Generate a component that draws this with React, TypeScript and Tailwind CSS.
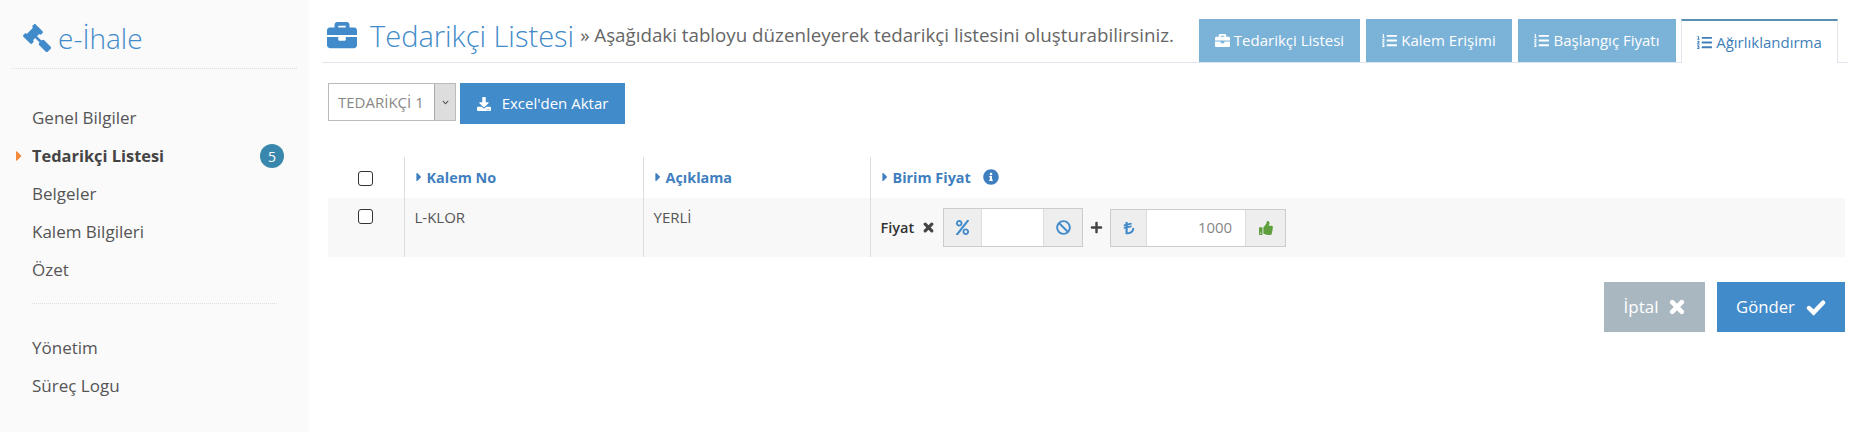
import {
  FaBan,
  FaBriefcase,
  FaCaretRight,
  FaChevronDown,
  FaDownload,
  FaGavel,
  FaInfoCircle,
  FaLiraSign,
  FaListOl,
  FaPercent,
  FaPlus,
  FaThumbsUp,
} from "react-icons/fa"

const menu = [
  { name: "Genel Bilgiler" },
  { name: "Tedarikçi Listesi", active: true, badge: 5 },
  { name: "Belgeler" },
  { name: "Kalem Bilgileri" },
  { name: "Özet" },
]

const tabs = [
  { name: "Tedarikçi Listesi", icon: FaBriefcase, width: "w-[161px]" },
  { name: "Kalem Erişimi", icon: FaListOl, width: "w-[146px]" },
  { name: "Başlangıç Fiyatı", icon: FaListOl, width: "w-[158px]" },
]

function RemoveIcon({ className }: { className: string }) {
  return (
    <svg viewBox="0 0 16 16" className={className} fill="none" stroke="currentColor" strokeWidth="4.6" strokeLinecap="round">
      <path d="M3.2 3.2 12.8 12.8M12.8 3.2 3.2 12.8" />
    </svg>
  )
}

function CheckIcon({ className }: { className: string }) {
  return (
    <svg viewBox="0 0 20 16" className={className} fill="none" stroke="currentColor" strokeWidth="4.4" strokeLinecap="round" strokeLinejoin="miter">
      <path d="M3 8.5 7.6 13 17 3.2" />
    </svg>
  )
}

function Sidebar() {
  return (
    <aside className="flex h-[432px] w-[309px] shrink-0 flex-col bg-[#fafafa] px-3">
      <div className="flex h-[69px] items-center gap-[7px] border-b border-dotted border-[#ddd] pl-[11px] pt-[7px]">
        <FaGavel className="h-[28px] w-[28px] -scale-x-100 text-[#428bca]" />
        <span className="text-[28px] font-light leading-none text-[#428bca]">e-İhale</span>
      </div>
      <nav className="mt-[30px] flex flex-col">
        {menu.map((item) => (
          <div key={item.name} className="relative flex h-[38px] items-center justify-between pl-5 pr-[13px] text-[17px] text-[#555]">
            {item.active && <FaCaretRight className="absolute left-[2px] top-[11px] h-4 w-[10px] text-[#f4893b]" />}
            <span className={item.active ? "text-[16.4px] font-bold text-[#444]" : ""}>{item.name}</span>
            {item.badge && (
              <span className="flex h-6 w-6 items-center justify-center rounded-full bg-[#3a87ad] text-[14px] text-white">
                {item.badge}
              </span>
            )}
          </div>
        ))}
      </nav>
      <div className="ml-5 mr-[20px] mt-[14px] border-t border-dotted border-[#ddd]" />
      <div className="mt-[25px] flex flex-col">
        <div className="flex h-[38px] items-center pl-5 text-[17px] text-[#555]">Yönetim</div>
        <div className="flex h-[38px] items-center pl-5 text-[17px] text-[#555]">Süreç Logu</div>
      </div>
    </aside>
  )
}

function Addon({ children, className }: { children: React.ReactNode; className: string }) {
  return <div className={`flex items-center justify-center bg-[#eee] ${className}`}>{children}</div>
}

function PriceInputs() {
  return (
    <div className="flex items-center">
      <span className="text-[14.5px] font-semibold text-[#333]">Fiyat</span>
      <RemoveIcon className="ml-[9px] h-[11px] w-[11px] text-[#444]" />
      <div className="ml-[9px] flex h-[39px] w-[140px] border border-[#ccc]">
        <Addon className="w-[38px] border-r border-[#ddd]">
          <FaPercent className="h-[15px] w-[15px] text-[#428bca]" />
        </Addon>
        <div className="flex-1 bg-white" />
        <Addon className="w-[39px] border-l border-[#ddd]">
          <FaBan className="h-[15px] w-[15px] text-[#428bca]" />
        </Addon>
      </div>
      <FaPlus className="mx-[7px] h-[13px] w-[13px] text-[#444]" />
      <div className="flex h-[38px] w-[176px] border border-[#ccc]">
        <Addon className="w-[36px] border-r border-[#ddd]">
          <FaLiraSign className="h-[14px] w-[14px] text-[#428bca]" />
        </Addon>
        <div className="flex flex-1 items-center justify-end bg-white pr-[13px] text-[15px] text-[#888]">1000</div>
        <Addon className="w-[40px] border-l border-[#ddd]">
          <FaThumbsUp className="h-[14px] w-[14px] text-[#5f9e3c]" />
        </Addon>
      </div>
    </div>
  )
}

function HeaderCell({ label, info }: { label: string; info?: boolean }) {
  return (
    <th className="border-l border-[#ddd] px-[10px] text-left align-middle">
      <div className="flex items-center text-[14.4px] font-bold text-[#3f7fc0]">
        <FaCaretRight className="mr-[4px] h-[14px] w-[8px]" />
        {label}
        {info && <FaInfoCircle className="ml-3 h-[16px] w-[16px]" />}
      </div>
    </th>
  )
}

export default function App() {
  return (
    <div className="flex h-[432px] w-[1864px] overflow-hidden bg-white font-['Open_Sans',sans-serif]">
      <Sidebar />
      <main className="flex-1 pl-[13px] pr-4">
        <header className="flex h-[63px] items-end justify-between border-b border-[#dfe5ea]">
          <div className="flex h-[50px] items-center pb-[4px] pl-[5px]">
            <FaBriefcase className="h-[30px] w-[30px] text-[#428bca]" />
            <h1 className="ml-[13px] text-[29px] font-light leading-none text-[#428bca]">Tedarikçi Listesi</h1>
            <span className="ml-[6px] text-[18.75px] text-[#666]">» Aşağıdaki tabloyu düzenleyerek tedarikçi listesini oluşturabilirsiniz.</span>
          </div>
          <div className="-mb-px mr-[10px] flex gap-[6px]">
            {tabs.map((tab) => (
              <div key={tab.name} className={`flex h-[43px] items-center justify-center gap-[4px] bg-[#7ab2d8] text-[15px] text-white ${tab.width}`}>
                <tab.icon className="h-[15px] w-[15px]" />
                {tab.name}
              </div>
            ))}
            <div className="-ml-px flex h-[44px] w-[157px] items-center justify-center gap-[4px] border-x border-t-[2px] border-x-[#dfe5ea] border-t-[#5a8fb4] bg-white text-[15px] text-[#3f7fb8]">
              <FaListOl className="h-[15px] w-[15px]" />
              Ağırlıklandırma
            </div>
          </div>
        </header>

        <div className="pl-[6px] pr-[3px]">
          <div className="mt-5 flex items-start gap-1">
            <div className="flex h-[38px] w-[128px] border border-[#bbb] bg-white">
              <span className="flex flex-1 items-center pl-[9px] text-[15px] text-[#888]">TEDARİKÇİ 1</span>
              <span className="flex w-[21px] items-center justify-center border-l border-[#aaa] bg-[#ddd]">
                <FaChevronDown className="h-[7px] w-[7px] text-[#555]" />
              </span>
            </div>
            <button className="flex h-[41px] w-[165px] items-center justify-center gap-[11px] bg-[#428bca] text-[15px] text-white">
              <FaDownload className="h-[14px] w-[14px]" />
              Excel'den Aktar
            </button>
          </div>

          <table className="mt-[33px] w-full table-fixed border-collapse">
            <colgroup>
              <col className="w-[76px]" />
              <col className="w-[239px]" />
              <col className="w-[227px]" />
              <col />
            </colgroup>
            <thead>
              <tr className="h-[41px]">
                <th className="pb-[1px] text-center align-middle">
                  <input type="checkbox" className="h-[15px] w-[15px] appearance-none rounded-[3px] border border-[#333] bg-white align-middle" />
                </th>
                <HeaderCell label="Kalem No" />
                <HeaderCell label="Açıklama" />
                <HeaderCell label="Birim Fiyat" info />
              </tr>
            </thead>
            <tbody>
              <tr className="h-[59px] bg-[#f8f8f8] text-[15px] text-[#555]">
                <td className="pt-[6px] text-center align-top">
                  <input type="checkbox" className="h-[15px] w-[15px] appearance-none rounded-[3px] border border-[#333] bg-white align-middle" />
                </td>
                <td className="border-l border-[#ddd] px-[10px] pt-[8px] align-top">L-KLOR</td>
                <td className="border-l border-[#ddd] px-[10px] pt-[8px] align-top">YERLİ</td>
                <td className="border-l border-[#ddd] px-[10px] align-middle">
                  <PriceInputs />
                </td>
              </tr>
            </tbody>
          </table>

          <div className="mt-[25px] flex justify-end gap-3">
            <button className="flex h-[50px] w-[101px] items-center justify-center gap-[11px] bg-[#a9b7c1] text-[17px] text-white">
              İptal
              <RemoveIcon className="h-[16px] w-[16px]" />
            </button>
            <button className="flex h-[50px] w-[128px] items-center justify-center gap-[11px] bg-[#428bca] text-[16.7px] text-white">
              Gönder
              <CheckIcon className="h-[17px] w-[20px]" />
            </button>
          </div>
        </div>
      </main>
    </div>
  )
}
